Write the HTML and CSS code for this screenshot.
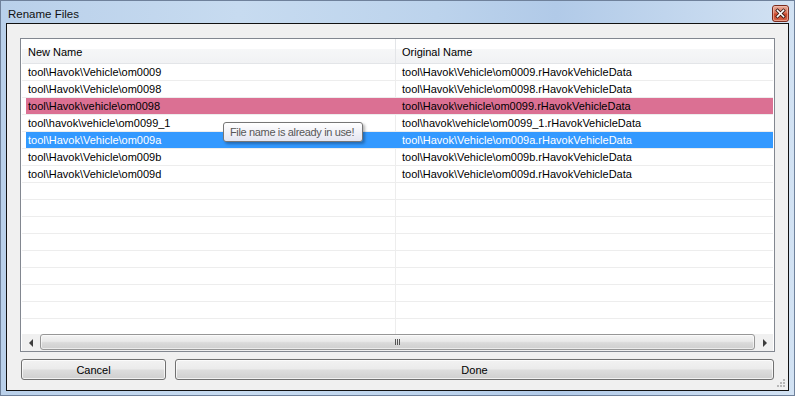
FILE: index.html
```html
<!DOCTYPE html>
<html lang="en">

<head>
    <meta charset="UTF-8">
    <meta name="viewport" content="width=device-width, initial-scale=1.0">
    <title>Rename Files</title>
    <link rel="stylesheet" href="styles.css">
</head>

<body>

    <div class="window">
        <div class="titlebar">
            <span class="title">Rename Files</span>
            <div class="closeButton">
                <svg width="17" height="17" viewBox="0 0 17 17">
                    <defs>
                        <linearGradient id="closeFill" x1="0" y1="0" x2="0" y2="1">
                            <stop offset="0" stop-color="#eab2a2"/>
                            <stop offset="0.45" stop-color="#d9735a"/>
                            <stop offset="0.55" stop-color="#c8462a"/>
                            <stop offset="1" stop-color="#d8664a"/>
                        </linearGradient>
                    </defs>
                    <rect x="0.5" y="0.5" width="16" height="16" rx="2.5" fill="url(#closeFill)" stroke="#7a2b1e"/>
                    <rect x="1.5" y="1.5" width="14" height="14" rx="1.5" fill="none" stroke="#f4c6b8" stroke-opacity="0.6"/>
                    <path d="M5.5 5.5 L11.5 11.5 M11.5 5.5 L5.5 11.5" stroke="#3a1a14" stroke-width="3.2" stroke-linecap="square"/>
                    <path d="M5.5 5.5 L11.5 11.5 M11.5 5.5 L5.5 11.5" stroke="#ffffff" stroke-width="1.6" stroke-linecap="square"/>
                </svg>
            </div>
        </div>

        <div class="frame">
            <div class="client">

                <div class="listView">
                    <div class="listHeader">
                        <div class="headerCell firstCol">New Name</div>
                        <div class="headerCell">Original Name</div>
                    </div>

                    <div class="listRows">
                        <div class="listRow">
                            <div class="rowCells">
                                <div class="cell firstCol">tool\Havok\Vehicle\om0009</div>
                                <div class="cell secondCol">tool\Havok\Vehicle\om0009.rHavokVehicleData</div>
                            </div>
                        </div>
                        <div class="listRow">
                            <div class="rowCells">
                                <div class="cell firstCol">tool\Havok\Vehicle\om0098</div>
                                <div class="cell secondCol">tool\Havok\Vehicle\om0098.rHavokVehicleData</div>
                            </div>
                        </div>
                        <div class="listRow conflict">
                            <div class="rowCells">
                                <div class="cell firstCol">tool\Havok\vehicle\om0098</div>
                                <div class="cell secondCol">tool\Havok\vehicle\om0099.rHavokVehicleData</div>
                            </div>
                        </div>
                        <div class="listRow">
                            <div class="rowCells">
                                <div class="cell firstCol">tool\havok\vehicle\om0099_1</div>
                                <div class="cell secondCol">tool\havok\vehicle\om0099_1.rHavokVehicleData</div>
                            </div>
                        </div>
                        <div class="listRow selected">
                            <div class="rowCells">
                                <div class="cell firstCol">tool\Havok\Vehicle\om009a</div>
                                <div class="cell secondCol">tool\Havok\Vehicle\om009a.rHavokVehicleData</div>
                            </div>
                        </div>
                        <div class="listRow">
                            <div class="rowCells">
                                <div class="cell firstCol">tool\Havok\Vehicle\om009b</div>
                                <div class="cell secondCol">tool\Havok\Vehicle\om009b.rHavokVehicleData</div>
                            </div>
                        </div>
                        <div class="listRow">
                            <div class="rowCells">
                                <div class="cell firstCol">tool\Havok\Vehicle\om009d</div>
                                <div class="cell secondCol">tool\Havok\Vehicle\om009d.rHavokVehicleData</div>
                            </div>
                        </div>
                        <!-- empty grid rows -->
                        <div class="listRow"><div class="rowCells"><div class="cell firstCol"></div><div class="cell secondCol"></div></div></div>
                        <div class="listRow"><div class="rowCells"><div class="cell firstCol"></div><div class="cell secondCol"></div></div></div>
                        <div class="listRow"><div class="rowCells"><div class="cell firstCol"></div><div class="cell secondCol"></div></div></div>
                        <div class="listRow"><div class="rowCells"><div class="cell firstCol"></div><div class="cell secondCol"></div></div></div>
                        <div class="listRow"><div class="rowCells"><div class="cell firstCol"></div><div class="cell secondCol"></div></div></div>
                        <div class="listRow"><div class="rowCells"><div class="cell firstCol"></div><div class="cell secondCol"></div></div></div>
                        <div class="listRow"><div class="rowCells"><div class="cell firstCol"></div><div class="cell secondCol"></div></div></div>
                        <div class="listRow"><div class="rowCells"><div class="cell firstCol"></div><div class="cell secondCol"></div></div></div>
                        <div class="listRow"><div class="rowCells"><div class="cell firstCol"></div><div class="cell secondCol"></div></div></div>
                    </div>

                    <div class="hScroll">
                        <div class="scrollArrow"><span class="arrowLeft"></span></div>
                        <div class="scrollTrack">
                            <div class="scrollThumb"><span class="grip"></span></div>
                        </div>
                        <div class="scrollArrow"><span class="arrowRight"></span></div>
                    </div>
                </div>

                <div class="buttonRow">
                    <button class="dialogButton cancelButton">Cancel</button>
                    <button class="dialogButton doneButton">Done</button>
                </div>

                <div class="tooltip">File name is already in use!</div>

                <svg class="sizeGrip" width="10" height="10" viewBox="0 0 10 10">
                    <rect x="7" y="1" width="2" height="2" fill="#b8b8b8"/>
                    <rect x="4" y="4" width="2" height="2" fill="#b8b8b8"/>
                    <rect x="7" y="4" width="2" height="2" fill="#b8b8b8"/>
                    <rect x="1" y="7" width="2" height="2" fill="#b8b8b8"/>
                    <rect x="4" y="7" width="2" height="2" fill="#b8b8b8"/>
                    <rect x="7" y="7" width="2" height="2" fill="#b8b8b8"/>
                </svg>
            </div>
        </div>
    </div>

</body>

</html>
```

FILE: styles.css
```css
html,
body {
    margin: 0;
    padding: 0;
}

body {
    font-family: "Liberation Sans", Arial, sans-serif;
    font-size: 11px;
    color: #000;
}

.window {
    box-sizing: border-box;
    width: 795px;
    height: 396px;
    border: 1px solid #6f819b;
    display: flex;
    flex-direction: column;
    background: linear-gradient(to right, #b9d0ea 0%, #c7dbf0 30%, #bcd3ec 55%, #b1cae8 70%, #d2e2f3 100%);
}

.titlebar {
    height: 22px;
    display: flex;
    justify-content: space-between;
    align-items: flex-start;
    padding-left: 7px;
}

.title {
    font-size: 11.5px;
    line-height: 22px;
    padding-top: 2px;
    color: #111;
}

.closeButton {
    width: 17px;
    height: 17px;
    margin-top: 4px;
    margin-right: 5px;
}

.closeButton svg {
    display: block;
}

.frame {
    flex: 1;
    display: flex;
    padding: 0 5px 4px 5px;
}

.client {
    flex: 1;
    position: relative;
    display: flex;
    flex-direction: column;
    border: 1px solid #111;
    background-color: #f0f0f0;
    padding: 14px 13px 10px 13px;
}

.listView {
    box-sizing: border-box;
    height: 314px;
    border: 1px solid #828790;
    background-color: #fff;
    padding: 0 1px;
    display: flex;
    flex-direction: column;
}

.listHeader {
    height: 24px;
    display: flex;
    border-bottom: 1px solid #e3e5e8;
    background: linear-gradient(to bottom, #ffffff 0%, #ffffff 40%, #f6f7f8 42%, #f1f2f4 100%);
}

.headerCell {
    flex: 1;
    box-sizing: border-box;
    padding: 5px 0 0 6px;
    line-height: 16px;
}

.headerCell.firstCol {
    flex: none;
    width: 374px;
    border-right: 1px solid #e3e5e8;
}

.listRows {
    height: 270px;
    overflow: hidden;
}

.listRow {
    padding-left: 4px;
    border-bottom: 1px solid #ededed;
}

.rowCells {
    display: flex;
    height: 16px;
    line-height: 16px;
}

.cell {
    box-sizing: border-box;
    white-space: nowrap;
    overflow: hidden;
}

.cell.firstCol {
    width: 370px;
    padding-left: 2px;
    border-right: 1px solid #ededed;
}

.cell.secondCol {
    flex: 1;
    padding-left: 6px;
}

.conflict .rowCells {
    background-color: #db7093;
}

.selected .rowCells {
    background-color: #3399ff;
    color: #fff;
}

.conflict .cell.firstCol,
.selected .cell.firstCol {
    border-right-color: transparent;
}

.hScroll {
    height: 17px;
    display: flex;
    background-color: #f0f0f0;
}

.scrollArrow {
    width: 17px;
    display: flex;
    align-items: center;
    justify-content: center;
}

.arrowLeft {
    width: 0;
    height: 0;
    border-top: 4px solid transparent;
    border-bottom: 4px solid transparent;
    border-right: 4px solid #3d3d3d;
}

.arrowRight {
    width: 0;
    height: 0;
    border-top: 4px solid transparent;
    border-bottom: 4px solid transparent;
    border-left: 4px solid #3d3d3d;
}

.scrollTrack {
    flex: 1;
    display: flex;
    padding: 0 1px 1px 1px;
}

.scrollThumb {
    flex: 1;
    box-sizing: border-box;
    border: 1px solid #979797;
    border-radius: 3px;
    background: linear-gradient(to bottom, #f4f4f4 0%, #e9e9e9 45%, #dadada 55%, #cfcfcf 100%);
    box-shadow: inset 0 0 0 1px rgba(255, 255, 255, 0.6);
    display: flex;
    align-items: center;
    justify-content: center;
}

.grip {
    width: 1px;
    height: 6px;
    background-color: #555;
    box-shadow: 2px 0 0 #555, 4px 0 0 #555;
    margin-right: 4px;
}

.buttonRow {
    display: flex;
    gap: 9px;
    margin: 7px 1px 0 1px;
}

.dialogButton {
    height: 21px;
    box-sizing: border-box;
    border: 1px solid #707070;
    border-radius: 3px;
    background: linear-gradient(to bottom, #f2f2f2 0%, #ebebeb 48%, #dddddd 52%, #cfcfcf 100%);
    box-shadow: inset 0 0 0 1px rgba(255, 255, 255, 0.7);
    font-family: "Liberation Sans", Arial, sans-serif;
    font-size: 11px;
    color: #000;
    padding: 0;
}

.cancelButton {
    width: 145px;
}

.doneButton {
    flex: 1;
}

.tooltip {
    position: absolute;
    left: 216px;
    top: 98px;
    height: 20px;
    box-sizing: border-box;
    padding: 0 8px 0 6px;
    line-height: 18px;
    border: 1px solid #767676;
    border-radius: 3px;
    background: linear-gradient(to bottom, #ffffff 0%, #e4e5f0 100%);
    box-shadow: 2px 2px 3px rgba(0, 0, 0, 0.3);
    color: #575757;
    letter-spacing: -0.35px;
    white-space: nowrap;
}

.sizeGrip {
    position: absolute;
    right: 2px;
    bottom: 2px;
}
```
